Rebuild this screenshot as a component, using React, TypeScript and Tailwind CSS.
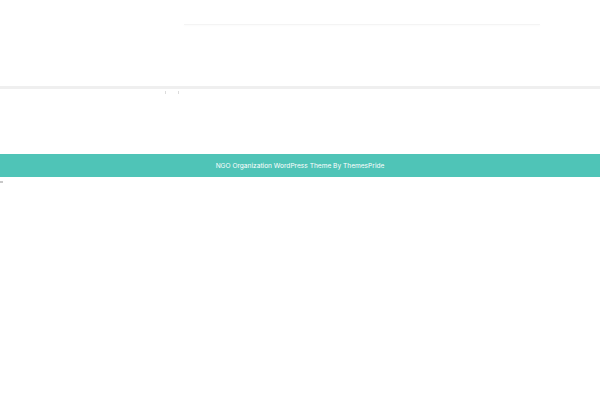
export default function App() {
  return (
    <div className="min-h-[400px] w-[600px] bg-white" style={{ fontFamily: "Inter, 'Noto Sans', sans-serif" }}>
      <header className="h-[86px] pt-[24px]">
        <div className="ml-[184px] h-[1px] w-[356px] bg-[#f4f4f4] shadow-[0_1px_2px_rgba(0,0,0,0.03)]" />
      </header>
      <div className="h-[3px] bg-[#efefef]" />
      <div className="flex h-[65px] items-start pt-[2px]">
        <span className="ml-[165px] h-[3px] w-[1px] bg-[#dcdcdc]" />
        <span className="ml-[12px] h-[3px] w-[1px] bg-[#dcdcdc]" />
      </div>
      <footer className="flex h-[23px] items-center justify-center bg-[#4fc4b7] pt-[2px]">
        <p className="text-[6.6px] text-white">NGO Organization WordPress Theme By ThemesPride</p>
      </footer>
      <div className="mt-[4px] h-[2px] w-[3px] bg-[#c8c8c8]" />
    </div>
  );
}
